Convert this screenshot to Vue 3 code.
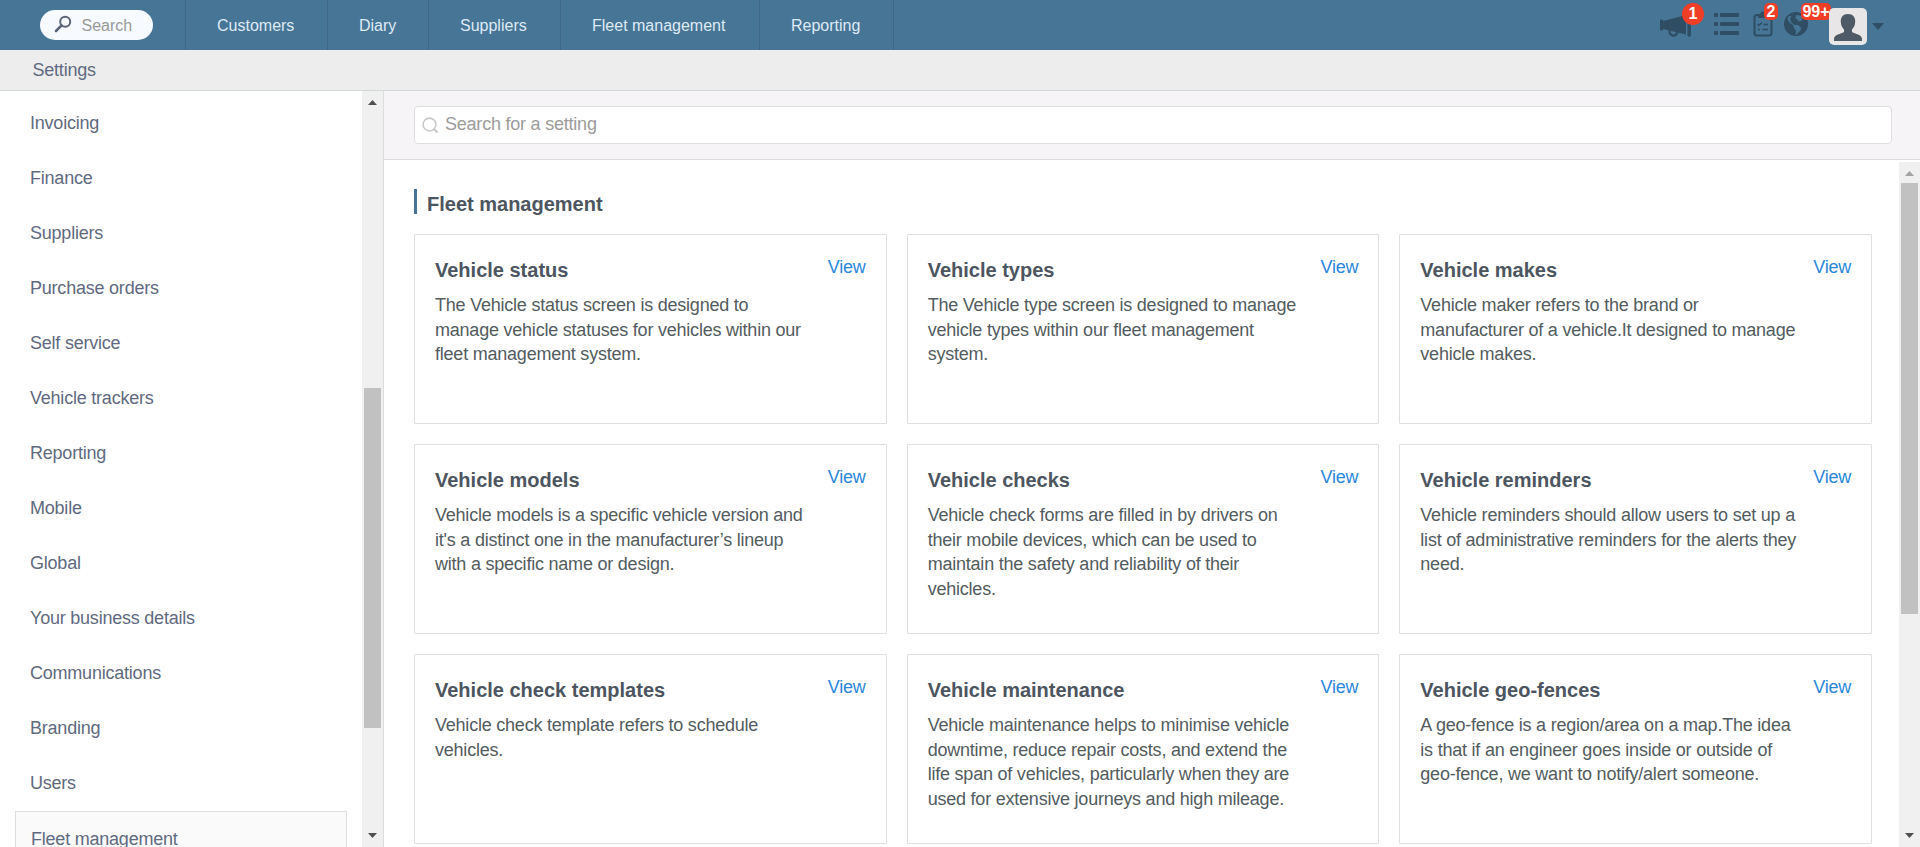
<script setup>
const nav = ['Customers', 'Diary', 'Suppliers', 'Fleet management', 'Reporting']
const sections = [
  'Invoicing', 'Finance', 'Suppliers', 'Purchase orders', 'Self service', 'Vehicle trackers',
  'Reporting', 'Mobile', 'Global', 'Your business details', 'Communications', 'Branding',
  'Users', 'Fleet management',
]
const active = 'Fleet management'
const cards = [
  { title: 'Vehicle status', text: 'The Vehicle status screen is designed to manage vehicle statuses for vehicles within our fleet management system.' },
  { title: 'Vehicle types', text: 'The Vehicle type screen is designed to manage vehicle types within our fleet management system.' },
  { title: 'Vehicle makes', text: 'Vehicle maker refers to the brand or manufacturer of a vehicle.It designed to manage vehicle makes.' },
  { title: 'Vehicle models', text: "Vehicle models is a specific vehicle version and it's a distinct one in the manufacturer’s lineup with a specific name or design." },
  { title: 'Vehicle checks', text: 'Vehicle check forms are filled in by drivers on their mobile devices, which can be used to maintain the safety and reliability of their vehicles.' },
  { title: 'Vehicle reminders', text: 'Vehicle reminders should allow users to set up a list of administrative reminders for the alerts they need.' },
  { title: 'Vehicle check templates', text: 'Vehicle check template refers to schedule vehicles.' },
  { title: 'Vehicle maintenance', text: 'Vehicle maintenance helps to minimise vehicle downtime, reduce repair costs, and extend the life span of vehicles, particularly when they are used for extensive journeys and high mileage.' },
  { title: 'Vehicle geo-fences', text: 'A geo-fence is a region/area on a map.The idea is that if an engineer goes inside or outside of geo-fence, we want to notify/alert someone.' },
]
</script>

<template>
  <div class="app">
    <header class="top">
      <div class="pill">
        <svg width="18" height="18" viewBox="0 0 18 18" fill="none" stroke="#5a6478">
          <circle cx="11.2" cy="6.8" r="5" stroke-width="2" />
          <path d="M7.6 10.4L2 16" stroke-width="2.6" stroke-linecap="round" />
        </svg>
        <span>Search</span>
      </div>
      <nav class="nav">
        <a v-for="n in nav" :key="n">{{ n }}</a>
      </nav>
      <div class="tools">
        <div class="tool horn">
          <svg width="32" height="24" viewBox="0 0 32 24" fill="#2f4d63">
            <path d="M0 5.500Q0 4.500 1 4.500H2Q3 4.500 3.200 6L26 0V19.500L3.200 14Q3 15.500 2 15.500H1Q0 15.500 0 14.500z" />
            <rect x="27.500" y="0" width="3.500" height="21.500" rx="1" />
            <path d="M9.500 15.500a4 4.200 0 0 0 8 1.500" fill="none" stroke="#2f4d63" stroke-width="2.400" />
          </svg>
          <b class="badge round">1</b>
        </div>
        <div class="tool list">
          <svg width="25" height="22" viewBox="0 0 25 22" fill="#2f4d63">
            <rect x="0" y="0" width="4" height="4" rx="1" /><rect x="6" y="0" width="19" height="4" rx="1" />
            <rect x="0" y="9" width="4" height="4" rx="1" /><rect x="6" y="9" width="19" height="4" rx="1" />
            <rect x="0" y="18" width="4" height="4" rx="1" /><rect x="6" y="18" width="19" height="4" rx="1" />
          </svg>
        </div>
        <div class="tool clip">
          <svg width="20" height="26" viewBox="0 0 20 26" fill="none" stroke="#2f4d63" stroke-width="2">
            <rect x="1.500" y="4" width="17" height="20.500" rx="2.500" />
            <path d="M5 7V3.500H7Q7.500 .5 10 .5T13 3.500h2V7z" fill="#2f4d63" stroke="none" />
            <path d="M4.500 13l1.500 1.500 2.800-3M10.500 13.500H15M5 18.500h2M9.500 18.500H15" stroke-width="1.500" />
          </svg>
          <b class="badge two">2</b>
        </div>
        <div class="tool globe">
          <svg width="24" height="24" viewBox="0 0 24 24">
            <circle cx="12" cy="12" r="12" fill="#2f4d63" />
            <path d="M12.500 3l4 .5 2 3-1 2.500-3 .5-1.500-2.500-2-.5zM3.500 5.500L6 3.500l1.500 1-1.500 2 1 3.500 3.500 3h3.500l3 2.500-.5 3-3 3-1 1.500-1-.5.500-3.500-2-3-1-3L6 11 4 8.500z" fill="#467596" />
          </svg>
          <b class="badge many">99+</b>
        </div>
        <div class="avatar">
          <svg width="38" height="37" viewBox="0 0 38 37" fill="#4e5a65">
            <path d="M19 6c5 0 7.500 3.500 7.200 8-.2 4-2 6-3.200 7.500v2.500c3 2 10 2.500 10 7v2H5v-2c0-4.500 7-5 10-7v-2.500C13.800 20 12 18 11.800 14 11.500 9.500 14 6 19 6z" />
          </svg>
        </div>
        <i class="caret"></i>
      </div>
    </header>
    <div class="crumb">Settings</div>
    <div class="body">
      <aside class="side">
        <ul>
          <li v-for="s in sections" :key="s" :class="{ active: s === active }">{{ s }}</li>
        </ul>
        <div class="bar">
          <svg class="up" width="9" height="5" viewBox="0 0 9 5"><path d="M0 5L4.500 0 9 5z" fill="#505050" /></svg>
          <div class="thumb side-thumb"></div>
          <svg class="down" width="9" height="5" viewBox="0 0 9 5"><path d="M0 0h9L4.500 5z" fill="#505050" /></svg>
        </div>
      </aside>
      <main class="main">
        <div class="finder">
          <div class="field">
            <svg width="17" height="17" viewBox="0 0 17 17" fill="none" stroke="#c8c8c8" stroke-width="1.600">
              <circle cx="7.500" cy="7.500" r="6.400" /><path d="M12 12l3.500 3.500" stroke-width="2" />
            </svg>
            <span>Search for a setting</span>
          </div>
        </div>
        <div class="scroll">
          <div class="content">
            <h2>Fleet management</h2>
            <div class="cards">
              <section v-for="c in cards" :key="c.title" class="card">
                <div class="copy">
                  <h3>{{ c.title }}</h3>
                  <p>{{ c.text }}</p>
                </div>
                <a>View</a>
              </section>
            </div>
          </div>
          <div class="bar">
            <svg class="up" width="9" height="5" viewBox="0 0 9 5"><path d="M0 5L4.500 0 9 5z" fill="#a3a3a3" /></svg>
            <div class="thumb main-thumb"></div>
            <svg class="down" width="9" height="5" viewBox="0 0 9 5"><path d="M0 0h9L4.500 5z" fill="#505050" /></svg>
          </div>
        </div>
      </main>
    </div>
  </div>
</template>

<style>
body { margin: 0; overflow: hidden; }
</style>

<style scoped>
* { box-sizing: border-box; }
.app {
  height: 847px; display: flex; flex-direction: column; overflow: hidden; background: #fff;
  font: 18px/20px "Liberation Sans", Arial, sans-serif; letter-spacing: -0.22px; color: #4c5560;
}
svg { display: block; flex: none; }
.top { height: 50px; flex: none; display: flex; background: #467596; letter-spacing: 0; font-size: 16px; }
.pill {
  width: 113px; height: 30px; margin: 10px 32px 0 40px; border-radius: 15px; background: #f7faff;
  display: flex; padding: 5px 0 0 14px; color: #999;
}
.pill span { margin: 1px 0 0 9.500px; }
.nav { display: grid; grid-template-columns: 142px 101px 132px 199px 134px; border-left: 1px solid #3f6886; }
.nav a { line-height: 52px; height: 50px; padding-left: 31px; color: #dfeaf5; border-right: 1px solid #3f6886; white-space: nowrap; }
.tools { margin-left: auto; width: 260px; display: flex; }
.tool { position: relative; }
.horn { width: 54px; padding-top: 15px; }
.list { width: 39px; padding-top: 13px; }
.clip { width: 31px; padding-top: 11px; }
.globe { width: 45px; padding-top: 12px; }
.badge { position: absolute; background: #f03d25; color: #fff; font: bold 16px/18px "Liberation Sans", Arial, sans-serif; text-align: center; border-radius: 5px; }
.round { left: 22px; top: 3px; width: 22px; height: 22px; border-radius: 50%; line-height: 21px; }
.two { left: 11px; top: 3px; width: 14px; height: 17px; }
.many { left: 17px; top: 3px; width: 30px; height: 17px; }
.avatar { width: 38px; height: 37px; margin-top: 8px; border-radius: 5px; background: #e8e6e6; position: relative; }
.caret { margin: 23px 0 0 5px; width: 12px; height: 7px; background: #2f4d63; clip-path: polygon(0 0, 100% 0, 50% 100%); }
.crumb { height: 41px; flex: none; background: #ededed; border-bottom: 1px solid #d0d9d8; padding: 10px 0 0 32.500px; color: #5f6a80; }
.body { flex: 1; min-height: 0; display: flex; }
.side { width: 384px; flex: none; display: flex; border-right: 1px solid #dcdcde; }
.side ul { list-style: none; margin: 0; padding: 5px 15px 0; width: 362px; overflow: hidden; }
.side li { height: 55px; line-height: 54px; padding-left: 15px; color: #5f6a80; }
.side li.active { border: 1px solid #dedede; background: #fafafa; height: 57px; }
.bar { width: 21px; flex: none; background: #f0f0f0; display: flex; flex-direction: column; }
.thumb { width: 17px; margin-left: 2px; background: #c1c1c1; }
.up { margin: 9px 0 0 6px; }
.down { margin: auto 0 9px 6px; }
.side-thumb { height: 340px; margin-top: 283px; }
.main { flex: 1; min-width: 0; display: flex; flex-direction: column; }
.finder { height: 69px; flex: none; background: #f6f4f6; border-bottom: 1px solid #dcdcde; padding: 15px 28px 0 30px; }
.field { height: 38px; border: 1px solid #dedede; border-radius: 4px; background: #fff; display: flex; color: #9c9c9c; padding: 7px 0 0 7px; }
.field svg { margin-top: 3px; }
.field span { margin-left: 6px; }
.scroll { flex: 1; min-height: 0; display: flex; padding-top: 2px; }
.content { flex: 1; overflow: hidden; padding: 27px 27px 0 30px; }
h2, h3, p { margin: 0; }
h2 { font-size: 20px; line-height: 30px; height: 25px; border-left: 3px solid #467596; padding-left: 10px; letter-spacing: 0; }
.cards { margin-top: 20px; display: grid; grid-template-columns: repeat(3, 1fr); grid-auto-rows: 190px; gap: 20px; }
.card { border: 1px solid #dedfe0; border-radius: 1px; display: flex; justify-content: space-between; padding: 22px 20px 0; }
.copy { width: 380px; }
h3 { font-size: 20px; line-height: 26px; letter-spacing: 0; }
p { margin-top: 10.400px; line-height: 24.480px; color: #535c60; }
.card a { color: #2b87dc; }
.main-thumb { height: 431px; margin-top: 7px; }
</style>
